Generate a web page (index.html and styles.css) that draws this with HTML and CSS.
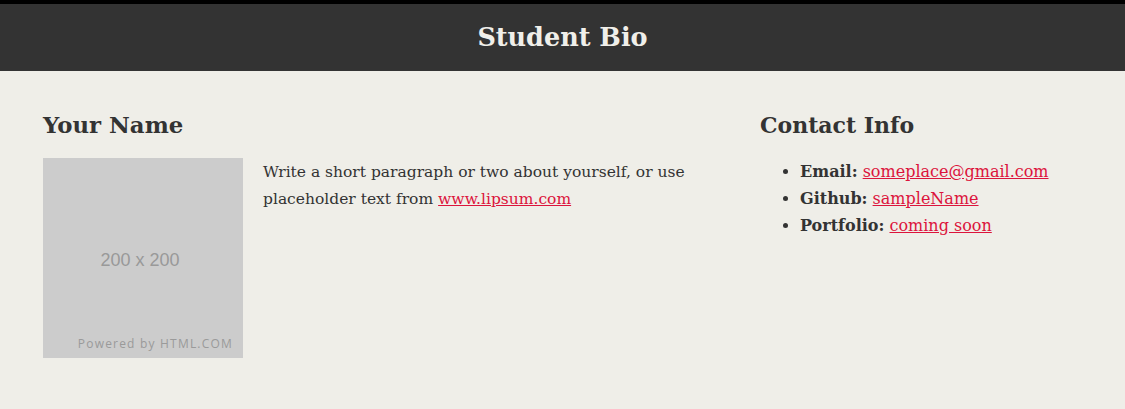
FILE: index.html
```html
<!DOCTYPE html>
<html>
<head>
<meta charset="utf-8">
<title>Student Bio</title>
<link rel="stylesheet" href="styles.css">
</head>
<body>
<header class="site-header">
  <h1 class="site-title">Student Bio</h1>
</header>
<main class="content">
  <section class="bio">
    <h2 class="section-title">Your Name</h2>
    <div class="bio-body">
      <div class="placeholder">
        <span class="placeholder-size">200 x 200</span>
        <span class="placeholder-credit">Powered by HTML.COM</span>
      </div>
      <p class="bio-text">Write a short paragraph or two about yourself, or use placeholder text from <a href="#">www.lipsum.com</a></p>
    </div>
  </section>
  <section class="contact">
    <h2 class="section-title">Contact Info</h2>
    <ul class="contact-list">
      <li><strong>Email:</strong> <a href="#">someplace@gmail.com</a></li>
      <li><strong>Github:</strong> <a href="#">sampleName</a></li>
      <li><strong>Portfolio:</strong> <a href="#">coming soon</a></li>
    </ul>
  </section>
</main>
</body>
</html>
```

FILE: styles.css
```css
html, body {
  margin: 0;
  padding: 0;
}
body {
  background: #efeee8;
  color: #333333;
  font-family: "DejaVu Serif", "Liberation Serif", serif;
  font-size: 16px;
  line-height: 27px;
}
.site-header {
  background: #333333;
  border-top: 4px solid #000000;
  height: 67px;
  display: flex;
  align-items: center;
  justify-content: center;
}
.site-title {
  margin: 0;
  color: #f0efea;
  font-size: 25.5px;
  font-weight: bold;
  line-height: 1;
}
.content {
  display: grid;
  grid-template-columns: 657px 1fr;
  gap: 60px;
  padding: 40px 43px;
}
.section-title {
  margin: 0 0 19px;
  font-size: 22px;
  line-height: 28px;
  font-weight: bold;
}
.bio .section-title {
  font-size: 22.8px;
}
.bio-body {
  display: flex;
  gap: 20px;
  align-items: flex-start;
}
.placeholder {
  flex: none;
  width: 200px;
  height: 200px;
  background: #cccccc;
  position: relative;
  display: flex;
  align-items: center;
  justify-content: center;
  font-family: "Liberation Sans", Arial, sans-serif;
}
.placeholder-size {
  color: #999999;
  font-size: 18px;
  margin: 4px 6px 0 0;
}
.placeholder-credit {
  position: absolute;
  right: 10px;
  bottom: 7px;
  color: #9a9a9a;
  font-size: 12px;
  line-height: 14px;
  letter-spacing: 1.2px;
  font-family: "Open Sans", sans-serif;
}
.bio-text {
  margin: 1px 0 0;
  font-size: 15.5px;
}
a {
  color: #dc143c;
  text-decoration: underline;
}
.contact-list {
  margin: 0;
  padding-left: 40px;
}
```
